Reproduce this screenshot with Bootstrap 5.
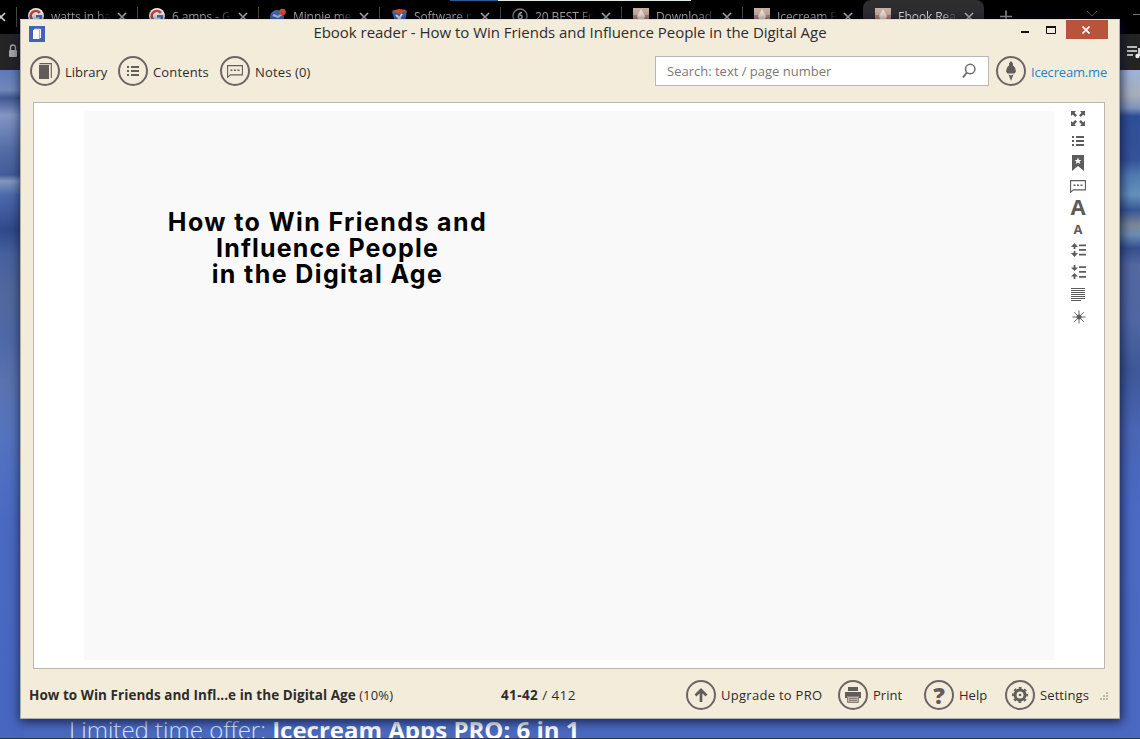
<!DOCTYPE html>
<html lang="en">
<head>
<meta charset="utf-8">
<meta name="viewport" content="width=device-width, initial-scale=1">
<title>Ebook reader</title>
<link href="https://cdn.jsdelivr.net/npm/bootstrap@5.3.0/dist/css/bootstrap.min.css" rel="stylesheet">
<style>
body{font-family:"Open Sans","Noto Sans",sans-serif;font-size:13px;line-height:20px;color:#2e2c2b;background:#4a69c0}
svg{display:block;flex:none}
.desktop{height:739px;border-bottom:1px solid #2b3350}
/* browser behind the reader */
.tabstrip{height:34px;background:#000}
.topline{left:450px;top:0;width:241px;height:1px;background:linear-gradient(90deg,#2b5a94 48px,#e4ebe6 48px)}
.lead-x{width:17px;flex:none;padding-top:9px}
.btab{width:121px;flex:none;height:34px;padding:8px 0 0 11px;position:relative;color:#b0a8a8;font-size:12px;line-height:17px}
.btab::before{content:"";position:absolute;left:-1px;top:7px;width:1px;height:20px;background:#4b4547}
.btab.on{background:#2e2d30;border-radius:8px 8px 0 0;color:#ddd;margin-left:-1px;padding-left:12px}
.btab.on::before{display:none}
.btab .cap{width:60px;margin:0 2px 0 7px;white-space:nowrap;overflow:hidden;letter-spacing:-.1px;-webkit-mask-image:linear-gradient(90deg,#000 74%,transparent 100%)}
.btab .x{margin:4px 0 0 4px}
.addr{height:36px;background:#252425}
.edge{height:669px;width:24px}
.edge-l{background:linear-gradient(180deg,#5d79b8 0,#7088bb 20px,#40578f 28px,#8296c4 45px,#536da5 80px,#445c9a 105px,#8197bf 111px,#4d68ac 125px,#30498a 160px,#47619e 185px,#52699d 230px,#4e69a8 270px,#5a72ae 310px,#5472bf 370px,#4969c2 460px,#4766bf)}
.edge-r{background:linear-gradient(180deg,#9db3da 0,#a8aeb9 25px,#8094bb 38px,#2e4f98 46px,#35529a 90px,#4f7bb0 105px,#6590bc 125px,#375796 140px,#7c8896 155px,#6c8cb5 165px,#35508f 178px,#5468a0 195px,#5067a3 250px,#3e5899 300px,#4a66b5 360px,#4a6ac4 440px,#4a69c0)}
.promo{left:69px;top:712px;font-size:24px;line-height:36px;height:26px;overflow:hidden;color:#dceefa;font-weight:300;white-space:nowrap}
.promo b{color:#fff;font-weight:700}
/* reader window */
.win{left:20px;top:19px;width:1100px;height:700px;background:#f4ecdb;border:1px solid #b3aba7;border-top-color:#e2d8cc;box-shadow:1px 2px 10px 1px rgba(5,14,45,.75)}
.titlebar{height:32px}
.caption{left:0;right:0;top:0;line-height:24px;font-size:15px;letter-spacing:-.03px;text-align:center}
.appicon{margin:6px 0 0 8px}
.wbtns{margin-right:11px}
.closer{width:42px;height:19px;background:#b9533c;padding-right:2px}
.toolbar{height:39px;padding:4px 12px 0 9px}
.tool{white-space:nowrap;height:30px}
.ring{width:30px;height:30px;border:2px solid #6d6561;border-radius:50%;flex:none;color:#625d5b}
.tool span.t{padding-left:5px;position:relative;top:1px}
.s-con,.s-not{letter-spacing:.15px}
.s-ice{letter-spacing:-.18px}
.s-upg{letter-spacing:.28px}
.s-set{letter-spacing:.1px}
.s-book{font-size:13.500px;letter-spacing:.05px}
.s-pct{letter-spacing:.15px}
.s-pages{font-size:13.500px;letter-spacing:.4px}
.search{width:334px;height:30px;border:1px solid #b9b8b6;background:#fff;color:#7b7979;padding:0 12px 0 11px}
.reader{margin:11px 14px 0 12px;height:567px;border:1px solid #bbb6b0;background:#fff}
.page{margin:8px 0 0 50px;width:970px;height:549px;background:#f9f9f9;padding:98px 0 0 58px}
.page h1{margin:0;width:371px;text-align:center;font:700 25px/26px Inter,sans-serif;color:#000;letter-spacing:1.4px}
.s-h2{letter-spacing:1.15px}
.side{width:48px;color:#5c5c5c;padding-top:8px}
.side>div{height:22px}
.foot{height:52px;padding-left:8px}
.grip{margin:2px 10px 0 0}
</style>
</head>
<body>
<svg width="0" height="0" class="position-absolute">
<defs>
<symbol id="x" viewBox="0 0 10 10"><path d="M1 1l8 8M9 1L1 9" stroke="#bbb3b3" stroke-width="1.6"/></symbol>
<symbol id="g" viewBox="0 0 16 16"><circle cx="8" cy="8" r="8" fill="#eee"/><path d="M3.2 10A5 5 0 0 1 11.8 5" fill="none" stroke="#c9432f" stroke-width="2.6"/><path d="M8 8.2h5A5 5 0 0 1 3.2 10" fill="none" stroke="#4770b5" stroke-width="2.4"/></symbol>
<symbol id="ic" viewBox="0 0 16 16"><rect width="16" height="16" fill="#b98578"/><path d="M0 0h16v7H0z" fill="#c9b0a2"/><path d="M8 1l4 7-1 3H5L4 8z" fill="#f2e3d6"/></symbol>
<symbol id="list" viewBox="0 0 12 12"><path d="M0 1h2v2H0zM4 1h8v2H4zM0 5h2v2H0zM4 5h8v2H4zM0 9h2v2H0zM4 9h8v2H4z" fill="currentColor"/></symbol>
<symbol id="note" viewBox="0 0 16 13"><path d="M.6.6h14.8v9.3H3.3L.6 12.3z" fill="none" stroke="currentColor" stroke-width="1.1"/><path d="M3.5 4.5h2v1.5h-2zM7 4.5h2v1.5H7zM10.5 4.5h2v1.5h-2z" fill="currentColor"/></symbol>
</defs>
</svg>
<div class="desktop position-relative overflow-hidden">
  <div class="tabstrip d-flex">
    <div class="lead-x"><svg width="6" height="15" viewBox="0 0 6 15"><path d="M-3 4l8 8M5 4l-8 8" stroke="#ccc" stroke-width="1.6"/></svg></div>
    <div class="btab d-flex"><svg width="16" height="16"><use href="#g"/></svg><div class="cap">watts in ba</div><svg class="x" width="10" height="10"><use href="#x"/></svg></div>
    <div class="btab d-flex"><svg width="16" height="16"><use href="#g"/></svg><div class="cap">6 amps - G</div><svg class="x" width="10" height="10"><use href="#x"/></svg></div>
    <div class="btab d-flex"><svg width="16" height="16" viewBox="0 0 16 16"><circle cx="7" cy="9" r="7" fill="#4468ac"/><path d="M3 7l5 2 4-3" stroke="#b9cbea" stroke-width="2" fill="none"/><circle cx="12.5" cy="4" r="3.3" fill="#cf4c3b"/></svg><div class="cap">Minnie me</div><svg class="x" width="10" height="10"><use href="#x"/></svg></div>
    <div class="btab d-flex"><svg width="16" height="16" viewBox="0 0 16 16"><path d="M1 4l7-2 8 1-2 11-9 2z" fill="#3b6ca8"/><path d="M0 3l8-2 8 1-7 4z" fill="#ca5438"/><path d="M5 7l6 6M11 6l-5 8" stroke="#e9eef5" stroke-width="2"/></svg><div class="cap">Software r</div><svg class="x" width="10" height="10"><use href="#x"/></svg></div>
    <div class="btab d-flex"><svg width="16" height="16" viewBox="0 0 16 16"><circle cx="8" cy="8" r="7" fill="none" stroke="#777" stroke-width="1.5"/><path d="M10 4.5C6 4.5 5.5 11 8 11s3-4 0-4" fill="none" stroke="#aaa" stroke-width="1.5"/></svg><div class="cap">20 BEST Fr</div><svg class="x" width="10" height="10"><use href="#x"/></svg></div>
    <div class="btab d-flex"><svg width="16" height="16"><use href="#ic"/></svg><div class="cap">Download</div><svg class="x" width="10" height="10"><use href="#x"/></svg></div>
    <div class="btab d-flex"><svg width="16" height="16"><use href="#ic"/></svg><div class="cap">Icecream E</div><svg class="x" width="10" height="10"><use href="#x"/></svg></div>
    <div class="btab on d-flex"><svg width="16" height="16"><use href="#ic"/></svg><div class="cap">Ebook Rea</div><svg class="x" width="10" height="10"><use href="#x"/></svg></div>
    <svg class="ms-3" width="140" height="30" viewBox="0 0 140 30"><path d="M0 16.500h12M6 10.500v12" stroke="#9d9999" stroke-width="1.5"/><path d="M87 11l5 5 5-5" fill="none" stroke="#555" stroke-width="1"/><path d="M133 14.5h7" stroke="#777"/></svg>
  </div>
  <div class="addr d-flex justify-content-between">
    <svg width="20" height="36" viewBox="0 0 20 36"><rect x="9" y="16" width="8" height="7" rx="1" fill="#a5a5a5"/><path d="M10.5 16v-2.5a2.5 2.5 0 0 1 5 0V16" fill="none" stroke="#a5a5a5" stroke-width="1.3"/></svg>
    <svg width="20" height="36" viewBox="0 0 20 36"><path d="M7 13h10M7 17h10M7 21h6M19 14v8" stroke="#eee" stroke-width="1.7"/><circle cx="17.500" cy="22" r="2.2" fill="#eee"/></svg>
  </div>
  <div class="d-flex justify-content-between"><div class="edge edge-l"></div><div class="edge edge-r"></div></div>
  <div class="topline position-absolute"></div>
  <div class="promo position-absolute"><span>Limited time offer: </span><b>Icecream Apps PRO: 6 in 1</b></div>

  <main class="win position-absolute">
    <header class="titlebar position-relative d-flex justify-content-between align-items-start">
      <svg class="appicon" width="16" height="16" viewBox="0 0 16 16"><path d="M0 0h16v16H0z" fill="#4264b5"/><path d="M4 4h6.500v9H4z" fill="#fff"/><path d="M5 3.300h6.500V12" fill="none" stroke="#fff"/></svg>
      <div class="caption position-absolute">Ebook reader - How to Win Friends and Influence People in the Digital Age</div>
      <div class="wbtns d-flex">
        <svg width="45" height="19" viewBox="0 0 45 19"><path d="M0 11h8v2H0z" fill="#111"/><path d="M25.500 7h9v6.500h-9z" fill="none" stroke="#111"/><path d="M25 6h10v2H25z" fill="#111"/></svg>
        <div class="closer d-flex align-items-center justify-content-center"><svg width="8" height="8" viewBox="0 0 8 8"><path d="M.5.5l7 7M7.5.5l-7 7" stroke="#fff" stroke-width="1.7"/></svg></div>
      </div>
    </header>
    <nav class="toolbar d-flex">
      <div class="tool d-flex align-items-center" style="width:88px"><div class="ring d-flex align-items-center justify-content-center"><svg width="13" height="16" viewBox="0 0 13 16"><path d="M0 2h10v14H0z" fill="currentColor"/><path d="M.5.6h11.800V15" fill="none" stroke="currentColor" stroke-width="1.1"/></svg></div><span class="t">Library</span></div>
      <div class="tool d-flex align-items-center" style="width:102px"><div class="ring d-flex align-items-center justify-content-center"><svg width="12" height="12"><use href="#list"/></svg></div><span class="t s-con">Contents</span></div>
      <div class="tool d-flex align-items-center"><div class="ring d-flex align-items-center justify-content-center"><svg width="16" height="13"><use href="#note"/></svg></div><span class="t s-not">Notes (0)</span></div>
      <div class="search ms-auto d-flex align-items-center justify-content-between"><span>Search: text / page number</span><svg width="14" height="16" viewBox="0 0 14 16"><circle cx="8.200" cy="6" r="4.700" fill="none" stroke="#6b6b6b" stroke-width="1.5"/><path d="M4.800 9.500L1 14.500" stroke="#6b6b6b" stroke-width="2"/></svg></div>
      <div class="tool d-flex align-items-center" style="width:111px;margin-left:7px"><div class="ring d-flex align-items-center justify-content-center"><svg width="12" height="20" viewBox="0 0 12 20"><path d="M6 0l2 2.500v2L10 6.500l1 4-1.500 2H2.500L1 10.500l1-4 2-2v-2zM3.500 13.300l2.500 1.200 2.500-1.200L6 20z" fill="currentColor"/></svg></div><span class="t s-ice" style="color:#2084c9">Icecream.me</span></div>
    </nav>
    <section class="reader d-flex">
      <article class="page"><h1>How to Win Friends and<br><span class="s-h2">Influence People</span><br>in the Digital Age</h1></article>
      <aside class="side d-flex flex-column">
        <div class="d-flex justify-content-center"><svg width="14" height="15" viewBox="0 0 14 15"><path d="M0 0h5L3.500 1.700 6 4.200 4.200 6 1.700 3.500 0 5zM14 0v5l-1.700-1.500L9.800 6 8 4.200l2.500-2.500L9 0zM0 15v-5l1.700 1.500L4.200 9 6 10.800l-2.500 2.500L5 15zM14 15H9l1.500-1.700L8 10.800 9.800 9l2.500 2.500L14 10z" fill="currentColor"/></svg></div>
        <div class="d-flex justify-content-center pt-1"><svg width="12" height="12" style="margin-top:-2px"><use href="#list"/></svg></div>
        <div class="d-flex justify-content-center"><svg width="12" height="16" viewBox="0 0 12 16"><path fill-rule="evenodd" d="M0 0h12v16l-6-5-6 5zM6 2.500L5 5H2.500l2 1.600L3.700 9 6 7.600 8.300 9l-.8-2.400L9.500 5H7z" fill="currentColor"/></svg></div>
        <div class="d-flex justify-content-center pt-1"><svg width="16" height="13" style="margin-top:-1px"><use href="#note"/></svg></div>
        <div class="d-flex justify-content-center fw-bold" style="font-size:22px;line-height:14px">A</div>
        <div class="d-flex justify-content-center fw-bold" style="font-size:13px;line-height:16px">A</div>
        <div class="d-flex justify-content-center"><svg width="15" height="14" viewBox="0 0 15 14"><path d="M3.500 0L7 4H4.400v2H2.600V4H0zM3.500 14L7 10H4.400V8H2.600v2H0zM8 1.500h7v1.800H8zM8 6h7v1.800H8zM8 10.700h7v1.800H8z" fill="currentColor"/></svg></div>
        <div class="d-flex justify-content-center"><svg width="15" height="14" viewBox="0 0 15 14"><path d="M3.500 6L7 2.500H4.400V0H2.600v2.500H0zM3.500 8L7 11.500H4.400V14H2.600v-2.500H0zM8 1.200h7V3H8zM8 6h7v1.800H8zM8 11h7v1.800H8z" fill="currentColor"/></svg></div>
        <div class="d-flex justify-content-center"><svg width="14" height="14" viewBox="0 0 14 14"><path d="M0 1.500h14M0 3.500h14M0 5.500h14M0 7.500h14M0 9.500h14M0 11.500h14M0 13.500h10" stroke="currentColor"/></svg></div>
        <div class="d-flex justify-content-center" style="padding:1px 0 0 1px"><svg width="14" height="14" viewBox="0 0 14 14"><circle cx="7" cy="7" r="2.500" fill="currentColor"/><path d="M7 .5v13M.5 7h13M2.200 2.200l9.600 9.600M11.800 2.200l-9.600 9.600" stroke="currentColor" stroke-width=".9"/></svg></div>
      </aside>
    </section>
    <footer class="foot d-flex align-items-center text-nowrap">
      <div style="width:472px"><b class="s-book">How to Win Friends and Infl...e in the Digital Age</b> <span class="s-pct">(10%)</span></div>
      <div class="s-pages" style="width:185px"><b>41-42</b> / 412</div>
      <div class="tool d-flex align-items-center" style="width:152px"><div class="ring d-flex align-items-center justify-content-center"><svg width="14" height="14" viewBox="0 0 14 14"><path d="M7 14V2M1.500 7.500L7 2l5.500 5.500" fill="none" stroke="currentColor" stroke-width="2.700"/></svg></div><span class="t s-upg" style="top:0">Upgrade to PRO</span></div>
      <div class="tool d-flex align-items-center" style="width:86px"><div class="ring d-flex align-items-center justify-content-center"><svg width="16" height="16" viewBox="0 0 16 16"><path d="M3 0h10v4H3zM0 5h16v6h-2v-2H2v2H0z" fill="currentColor"/><path d="M2.500 9.500h11v6h-11z" fill="#bdb2a3" stroke="#8b837b"/><path d="M4 11.500h8M4 13.500h8" stroke="#8b837b"/></svg></div><span class="t" style="top:0">Print</span></div>
      <div class="tool d-flex align-items-center" style="width:81px"><div class="ring d-flex align-items-center justify-content-center" style="font-size:23px;font-weight:800">?</div><span class="t" style="top:0">Help</span></div>
      <div class="tool d-flex align-items-center"><div class="ring d-flex align-items-center justify-content-center"><svg width="16" height="16" viewBox="0 0 16 16"><circle cx="8" cy="8" r="5" fill="none" stroke="currentColor" stroke-width="3"/><circle cx="8" cy="8" r="7.100" fill="none" stroke="currentColor" stroke-width="1.800" stroke-dasharray="2.800 2.776" stroke-dashoffset="1.400"/><circle cx="8" cy="8" r="1.300" fill="currentColor"/></svg></div><span class="t s-set" style="top:0">Settings</span></div>
      <svg class="grip ms-auto" width="9" height="8" viewBox="0 0 9 8"><path d="M6 0h2v2H6zM3 3h2v2H3zM6 3h2v2H6zM0 6h2v2H0zM3 6h2v2H3zM6 6h2v2H6z" fill="#bdb5a8"/></svg>
    </footer>
  </main>
</div>
<script src="https://cdn.jsdelivr.net/npm/bootstrap@5.3.0/dist/js/bootstrap.bundle.min.js"></script>
</body>
</html>
